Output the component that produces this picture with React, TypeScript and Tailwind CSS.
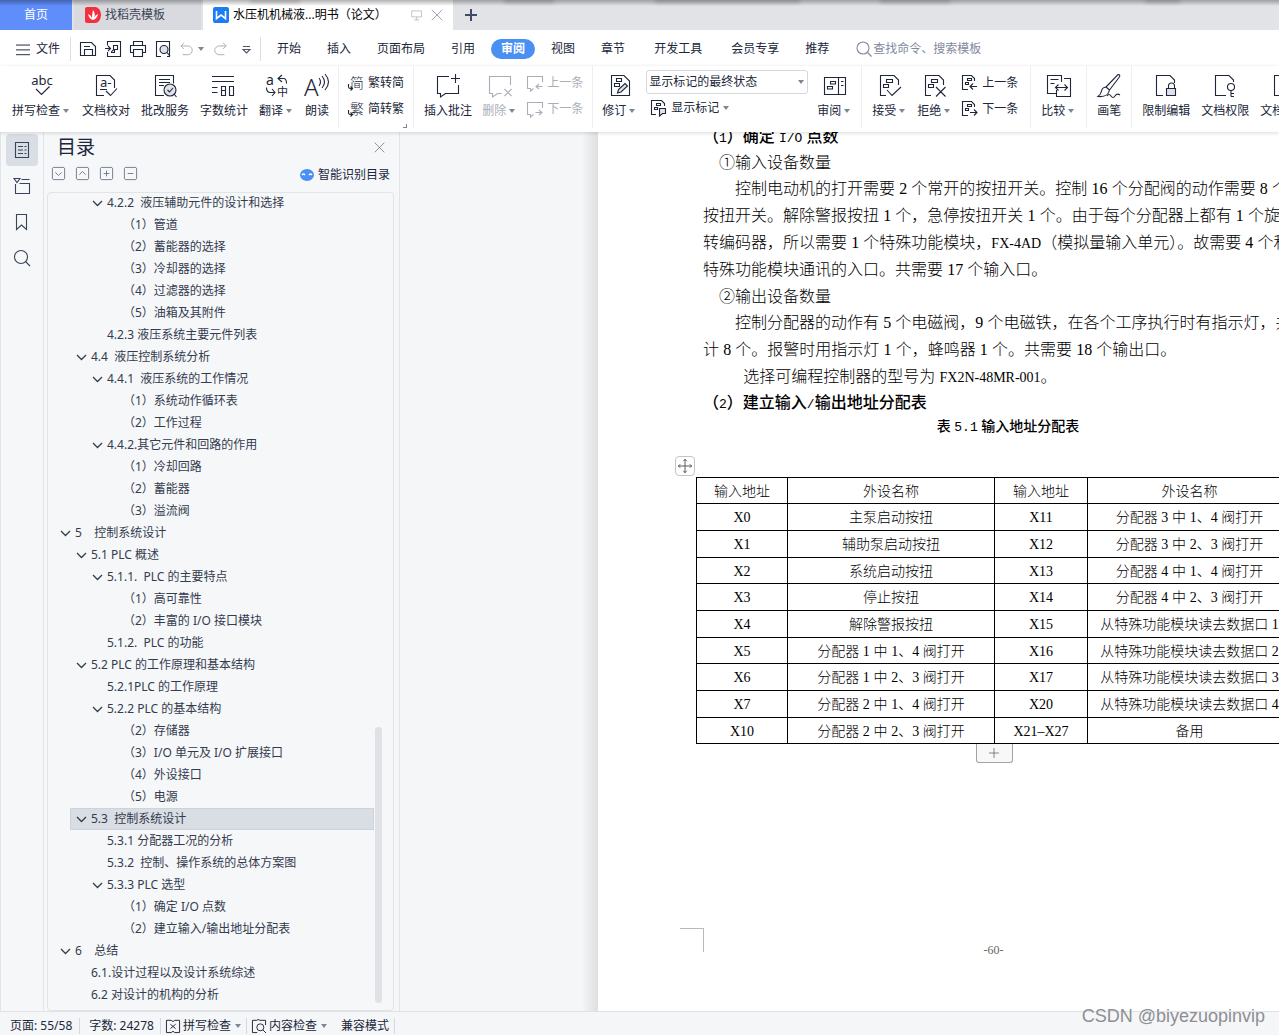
import { Fragment, ReactNode } from "react";

type IconName = keyof typeof ICONS;

const DOC = "M8 21.5H2.5V1.5H16l4.5 4.5V11";

// All large icons share a 24x24 grid, small ones 16x16
const ICONS = {
    spell: (
        <>
            <text x="12" y="11" textAnchor="middle" fontSize="13" fill="currentColor" stroke="none">abc</text>
            <path d="M6 15l5.5 5.5 8-8" />
        </>
    ),
    proof: (
        <>
            <path d="M10 21.5H2.5V1.5H16l4.5 4.5v8M6 15.5h7" />
            <text x="6" y="13" fontSize="13" fill="currentColor" stroke="none">a-</text>
            <path d="M12 17l4.5 4.5 6.5-7" />
        </>
    ),
    correct: (
        <>
            <path d="M11 21.5H2.5V1.5h18v8M6 5.5h11M6 8.5h11M6 11.5h5" />
            <circle cx="17" cy="16" r="6" fill="#dfe2e8" />
            <path d="M14.5 16l2 2 3.500-4M21 20l2.5 3" />
        </>
    ),
    count: <path d="M0 2.5h22M0 7.5h22M0 13.5h5.500M0 18.500h5.500M9.500 12.500h4v9h-4zM9.500 16.500h4M17.500 12.500h4v9h-4z" />,
    translate: (
        <>
            <text x="1" y="11" fontSize="14" fill="currentColor" stroke="none">a</text>
            <text x="12" y="22" fontSize="11" fill="currentColor" stroke="none">中</text>
            <path d="M17 1l-4 3.500 4 3.500M13.500 4.500h5q3 0 3 5M1.500 13.500q0 5 4 5h4M7 15l3 3.500-3 3.500" />
        </>
    ),
    read: (
        <>
            <text x="-1" y="22" fontSize="24" fontWeight="300" fill="currentColor" stroke="none">A</text>
            <path d="M14 4q3 4 0 8M17 2q5 6 0 12M20 0q7 8 0 16" />
        </>
    ),
    addNote: <path d="M13 2.500H1.500v17h3v3.500l5-3.500h13V11M19.500 0v9M15 4.500h9" />,
    delNote: (
        <>
            <path d="M22.500 11V2.500h-21v17h3v3.500l5-3.500h4" />
            <path d="M16.500 15l7 7M23.500 15l-7 7" />
        </>
    ),
    revise: (
        <>
            <path d="M16 1.500H3.500v20h18V7zM8.500 4.500h5v3h-5zM6.500 9.500h5v3h-5z" />
            <path d="M9.500 19l1-3.500 6.500-6 2.500 2.500-6.500 6z" fill="#dfe2e8" />
        </>
    ),
    review: <path d="M1.500 3.500h14v17h-14zM15.500 3.500h7v17h-7M18 7.500h2.500M18 11.500h2.500M7.500 7.500h5v2.500h-5zM4.500 12.500h5v2.500h-5z" />,
    accept: <path d={DOC + "M8.500 5.500h6v3h-6zM5.500 10.500h5v3h-5zM9 16l5 5.500 9-8.500"} />,
    reject: <path d={DOC + "M8.500 5.500h6v3h-6zM5.500 10.500h5v3h-5zM13 13l9.500 9.500M22.500 13L13 22.500"} />,
    compare: <path d="M14.500 8V1.500h-14v18h9V16M17 4.500h6.500v18h-14v-3M3.500 5.500h8M3.500 9.500h4M8.500 13.500h12M11.500 10.500l-3 3 3 3M17.500 10.500l3 3-3 3" />,
    brush: (
        <>
            <path d="M9 13L21 .500q3 0 1 3L12.500 16zM9 13q-4 .500-4.500 4T1 22.500q10 1 11.500-6.500z" />
            <path d="M10 22q2-3 4 0t4 0 5-1" />
        </>
    ),
    lock: (
        <>
            <path d="M9 21.500H2.500V1.500H16l4.500 4.500V9M14.500 14v-2a3 3 0 016 0v2" />
            <path d="M12.500 14.500h9v7h-9z" fill="#dfe2e8" />
        </>
    ),
    key: (
        <>
            <path d="M13 21.500H2.500V1.500H16l4.500 4.500V8" />
            <circle cx="18" cy="13" r="3.500" />
            <path d="M18 16.500v6M18 19.500h3M18 22.500h3" />
        </>
    ),
    doc: <path d={DOC + "v10H8"} />,
};

function Icon({ name }: { name: IconName }) {
    return (
        <svg className="h-6 w-6 overflow-visible" viewBox="0 0 24 24" fill="none" stroke="currentColor" strokeWidth="1.1">
            {ICONS[name]}
        </svg>
    );
}

function Small({ d, children, className = "h-4 w-4" }: { d?: string; children?: ReactNode; className?: string }) {
    return (
        <svg className={`shrink-0 overflow-visible ${className}`} viewBox="0 0 16 16" fill="none" stroke="currentColor" strokeWidth="1.1">
            {d && <path d={d} />}
            {children}
        </svg>
    );
}

function Caret() {
    return (
        <svg className="h-1 w-1.5 shrink-0 text-[#7d8597]" viewBox="0 0 6 4" fill="currentColor">
            <path d="M0 0h6L3 4z" />
        </svg>
    );
}

function RibbonButton({ icon, label, caret, muted }: { icon: IconName; label: string; caret?: boolean; muted?: boolean }) {
    return (
        <button className={`flex shrink-0 flex-col items-center gap-1 pt-2 ${muted ? "text-[#a9aeb8]" : ""}`}>
            <Icon name={icon} />
            <span className="flex items-center gap-[3px] leading-[18px]">
                {label}
                {caret && (
                    <span className="flex w-2">
                        <Caret />
                    </span>
                )}
            </span>
        </button>
    );
}

function RowButton({ icon, label, caret }: { icon: ReactNode; label: string; caret?: boolean }) {
    return (
        <button className="flex h-[26px] items-center gap-1">
            {icon}
            <span>{label}</span>
            {caret && <Caret />}
        </button>
    );
}

// Character with a small turning arrow at its lower left
function ConvertIcon({ char }: { char: string }) {
    return (
        <Small>
            <text x="2" y="13" fontSize="14" fontWeight="300" fill="currentColor" stroke="none">{char}</text>
            <path d="M.500 9v3q0 1.500 2 1.500h1.500M2.500 11.500l2 2-2 2" />
        </Small>
    );
}

function Group({ children, className = "px-[10px]" }: { children: ReactNode; className?: string }) {
    return <div className={`flex h-[62px] shrink-0 border-r border-[#eceef1] ${className}`}>{children}</div>;
}

function TabBar() {
    return (
        <div className="relative flex h-[30px] shrink-0 bg-[#e2e3e7]">
            <button className="w-[72px] bg-[#5f8dfa] text-white">首页</button>
            <button className="ml-0.5 flex w-[127px] items-center gap-1 bg-[#d8dadf] pl-[11px] text-[#3c4354]">
                <svg className="h-4 w-4" viewBox="0 0 16 16">
                    <path d="M2 0h8a6 8 0 010 16H2a2 2 0 01-2-2V2a2 2 0 012-2z" fill="#f5303d" />
                    <path d="M8 13q-4-1-5-6 3 1 4 4 0-4 1-8 3 4 1 8 1-3 4-4-1 5-5 6z" fill="#fff" />
                </svg>
                找稻壳模板
            </button>
            <div className="ml-0.5 flex w-[250px] items-center bg-white pl-2.5 text-black">
                <svg className="h-4 w-4" viewBox="0 0 16 16">
                    <rect width="16" height="16" rx="2" fill="#1b7cf5" />
                    <path d="M3.500 4v7.500L8 8l4.500 3.500V4" fill="none" stroke="#fff" strokeWidth="1.600" />
                </svg>
                <span className="ml-1 flex-1 whitespace-nowrap">水压机机械液...明书（论文）</span>
                <Small className="h-3 w-3 text-[#b3b9c9]" d="M1 2.500h13v8H1zM7.500 10.500v4M4 14.500h7" />
                <button aria-label="关闭" className="mr-2.5 ml-2">
                    <Small className="h-3 w-3 text-[#8891a8]" d="M1 1l14 14M15 1L1 15" />
                </button>
            </div>
            <button aria-label="新建" className="ml-3">
                <svg className="h-3 w-3 text-[#3d4a68]" viewBox="0 0 12 12" stroke="currentColor" strokeWidth="2">
                    <path d="M6 0v12M0 6h12" />
                </svg>
            </button>
            {/* Shadow cast by the window above */}
            <div className="pointer-events-none absolute inset-x-0 top-0 flex h-1.5 bg-gradient-to-b from-black/30 to-transparent pl-[250px]">
                <div className="h-0.5 w-[50px] bg-black/30 blur-[2px]" />
                <div className="ml-[204px] h-0.5 w-[50px] bg-black/30 blur-[2px]" />
                <div className="ml-[101px] h-0.5 w-[145px] bg-black/30 blur-[2px]" />
                <div className="ml-[80px] h-0.5 w-[70px] bg-black/30 blur-[2px]" />
                <div className="ml-[195px] h-0.5 w-[35px] bg-black/30 blur-[2px]" />
            </div>
        </div>
    );
}

const MENU = ["开始", "插入", "页面布局", "引用", "审阅", "视图", "章节", "开发工具", "会员专享", "推荐"];

function MenuBar() {
    return (
        <div className="flex h-9 shrink-0 items-center pt-0.5">
            <button className="flex items-center gap-1.5 pl-4">
                <Small className="h-3.5 w-3.5" d="M0 3.500h16M0 9h16M0 14.500h16" />
                文件
            </button>
            <div className="ml-[10px] flex h-6 w-[191px] items-center border-x border-[#dcdfe4] pl-[9px]">
                <div className="flex flex-1 items-center gap-[9px]">
                    <button aria-label="保存"><Small d="M.500 1.500h11l4 4v9H.500zM4.500 14.500v-6h8v6M4 5.500h6" /></button>
                    <button aria-label="输出为PDF"><Small d="M2.500 4.500v-4h13v15h-13V11M0 7.500h5M3 5l2.500 2.500L3 10M8.500 8.500V4.500h4v4h-3q-3 1-3 3h3v-3" /></button>
                    <button aria-label="打印"><Small d="M3.500 4.500v-4h9v4M3.500 11.500h-3v-7h15v7h-3M3.500 8.500h9v7h-9z" /></button>
                    <button aria-label="打印预览">
                        <Small d="M6 15.500H1.500V.500h13v15H12">
                            <circle cx="9" cy="8.500" r="4" fill="#dfe2e8" />
                            <path d="M12 11.500l3 3.500" />
                        </Small>
                    </button>
                    <button aria-label="撤销" className="flex items-center gap-1 text-[#a9aeb8]">
                        <Small className="h-3.5 w-3.5" d="M4.500 1L1 4.500 4.500 8M1 4.500h8a5 5 0 010 10H3" />
                        <Caret />
                    </button>
                    <button aria-label="恢复" className="text-[#a9aeb8]">
                        <Small className="h-3.5 w-3.5" d="M11.500 1L15 4.500 11.500 8M15 4.500H7a5 5 0 000 10h6" />
                    </button>
                    <button aria-label="自定义快速访问" className="pl-0.5 text-[#4d5567]"><Small d="M5 5.500h7M5 8.500h7l-3.500 3.500z" /></button>
                </div>
            </div>
            <nav className="ml-[3px] flex items-center">
                {MENU.map((item) => (
                    <button
                        key={item}
                        className={
                            item === "审阅"
                                ? "mx-[3px] h-5 rounded-full bg-[#4a90f2] px-[10px] font-bold text-white"
                                : item === "开发工具"
                                    ? "px-4"
                                    : "px-[13px]"
                        }
                    >
                        {item}
                    </button>
                ))}
            </nav>
            <label className="ml-[14px] flex items-center gap-px text-[#8189a0]">
                <Small>
                    <circle cx="7" cy="7" r="6" />
                    <path d="M11.500 11.500l4 4" />
                </Small>
                <input aria-label="查找命令" className="w-40 outline-none placeholder:text-[#8189a0]" placeholder="查找命令、搜索模板" />
            </label>
        </div>
    );
}

function Ribbon() {
    const notePrev = "M15.500 7V1.500H.500v12h3V16l3-2.500M15.500 11.500h-6M12 9l-3 2.500 3 2.500";
    const noteNext = "M15.500 7V1.500H.500v12h3V16l3-2.500M8.500 11.500h6M12 9l3 2.500-3 2.500";
    const docPart = "M6 14.500H.500V.500h9l3 3V6M5.500 3.500h4v2h-4zM3.500 7.500h3v2h-3z";
    return (
        <div className="relative z-10 flex h-[66px] shrink-0 overflow-hidden shadow-[0_1px_4px_rgba(0,0,0,0.15)]">
            <Group className="gap-[11px] pr-[9px] pl-3">
                <RibbonButton icon="spell" label="拼写检查" caret />
                <RibbonButton icon="proof" label="文档校对" />
                <RibbonButton icon="correct" label="批改服务" />
                <RibbonButton icon="count" label="字数统计" />
                <RibbonButton icon="translate" label="翻译" caret />
                <RibbonButton icon="read" label="朗读" />
            </Group>
            <Group className="relative px-[9px]">
                <div className="pt-1">
                    <RowButton label="繁转简" icon={<ConvertIcon char="简" />} />
                    <RowButton label="简转繁" icon={<ConvertIcon char="繁" />} />
                </div>
                <span className="absolute right-1.5 bottom-0 h-1 w-1 border-r border-b border-[#7d8597]" />
            </Group>
            <Group className="gap-[10px] pr-[9px] pl-[10px]">
                <RibbonButton icon="addNote" label="插入批注" />
                <RibbonButton icon="delNote" label="删除" caret muted />
                <div className="pt-1 text-[#a9aeb8]">
                    <RowButton label="上一条" icon={<Small d={notePrev} />} />
                    <RowButton label="下一条" icon={<Small d={noteNext} />} />
                </div>
            </Group>
            <Group className="gap-[9px] px-[9px]">
                <RibbonButton icon="revise" label="修订" caret />
                <div className="pt-1">
                    <div className="relative flex h-6 w-[162px] items-center">
                        <select aria-label="显示标记" className="h-6 w-full appearance-none rounded-[3px] border border-[#d5d8de] pl-0.5 text-xs outline-none">
                            <option>显示标记的最终状态</option>
                        </select>
                        <span className="pointer-events-none absolute right-1"><Caret /></span>
                    </div>
                    <div className="pt-px pl-[5px]">
                        <RowButton
                            label="显示标记"
                            caret
                            icon={
                                <Small d="M5 14.500H.500V.500h10l3 3V6M5.500 3.500h4v2h-4zM3.500 7.500h3v2h-3z">
                                    <path d="M8.500 8.500h6v5h-3l-3 2.500z" fill="#dfe2e8" />
                                </Small>
                            }
                        />
                    </div>
                </div>
                <RibbonButton icon="review" label="审阅" caret />
            </Group>
            <Group className="gap-[10px] px-[10px]">
                <RibbonButton icon="accept" label="接受" caret />
                <RibbonButton icon="reject" label="拒绝" caret />
                <div className="pt-1 pr-0.5">
                    <RowButton label="上一条" icon={<Small d={docPart + "M15 11.500H8M11 8.500l-3 3 3 3"} />} />
                    <RowButton label="下一条" icon={<Small d={docPart + "M8 11.500h7M12 8.500l3 3-3 3"} />} />
                </div>
            </Group>
            <Group>
                <RibbonButton icon="compare" label="比较" caret />
            </Group>
            <Group>
                <RibbonButton icon="brush" label="画笔" />
            </Group>
            <Group className="gap-[11px] px-[10px]">
                <RibbonButton icon="lock" label="限制编辑" />
                <RibbonButton icon="key" label="文档权限" />
                <RibbonButton icon="doc" label="文档定稿" />
            </Group>
        </div>
    );
}

// level, text, has children
const TOC: [number, string, boolean?][] = [
    [3, "4.2.2  液压辅助元件的设计和选择", true],
    [4, "（1）管道"],
    [4, "（2）蓄能器的选择"],
    [4, "（3）冷却器的选择"],
    [4, "（4）过滤器的选择"],
    [4, "（5）油箱及其附件"],
    [3, "4.2.3 液压系统主要元件列表"],
    [2, "4.4  液压控制系统分析", true],
    [3, "4.4.1  液压系统的工作情况", true],
    [4, "（1）系统动作循环表"],
    [4, "（2）工作过程"],
    [3, "4.4.2.其它元件和回路的作用", true],
    [4, "（1）冷却回路"],
    [4, "（2）蓄能器"],
    [4, "（3）溢流阀"],
    [1, "5    控制系统设计", true],
    [2, "5.1 PLC 概述", true],
    [3, "5.1.1.  PLC 的主要特点", true],
    [4, "（1）高可靠性"],
    [4, "（2）丰富的 I/O 接口模块"],
    [3, "5.1.2.  PLC 的功能"],
    [2, "5.2 PLC 的工作原理和基本结构", true],
    [3, "5.2.1PLC 的工作原理"],
    [3, "5.2.2 PLC 的基本结构", true],
    [4, "（2）存储器"],
    [4, "（3）I/O 单元及 I/O 扩展接口"],
    [4, "（4）外设接口"],
    [4, "（5）电源"],
    [2, "5.3  控制系统设计", true],
    [3, "5.3.1 分配器工况的分析"],
    [3, "5.3.2  控制、操作系统的总体方案图"],
    [3, "5.3.3 PLC 选型", true],
    [4, "（1）确定 I/O 点数"],
    [4, "（2）建立输入/输出地址分配表"],
    [1, "6    总结", true],
    [2, "6.1.设计过程以及设计系统综述"],
    [2, "6.2 对设计的机构的分析"],
];

const INDENT = ["", "pl-[11px]", "pl-[27px]", "pl-[43px]", "pl-[59px]"];
const SELECTED = "ml-[22px] w-[304px] border border-[#cdd3da] bg-[#d9dde4] pl-1";

function SideBar() {
    return (
        <div className="flex w-11 shrink-0 flex-col items-center gap-1 border-x border-[#e1e4e9] pt-0.5 text-[#3b4358]">
            <button aria-label="目录" className="flex h-8 w-8 items-center justify-center rounded-sm bg-[#d9dde4]">
                <Small d="M1.500.500h13v15h-13zM4 4.500h5M10.500 4.500h2M4 8h5M10.500 8h2M4 11.500h5M10.500 11.500h2" />
            </button>
            <button aria-label="章节" className="flex h-8 w-8 items-center justify-center">
                <Small d="M0 .500h6L3 4.500zM7.500 1.500h8M1.500 6v9.500h14v-10h-10" />
            </button>
            <button aria-label="书签" className="flex h-8 w-8 items-center justify-center">
                <Small d="M2.500.500h10v15l-5-4.500-5 4.500z" />
            </button>
            <button aria-label="查找" className="flex h-8 w-8 items-center justify-center">
                <Small>
                    <circle cx="7" cy="7" r="6.500" />
                    <path d="M11.500 11.500L16 16" />
                </Small>
            </button>
        </div>
    );
}

function TocPanel() {
    const tools: [string, string][] = [
        ["展开", "M4 6.500l4 4 4-4"],
        ["收缩", "M4 9.500l4-4 4 4"],
        ["提升", "M4.500 8h7M8 4.500v7"],
        ["降低", "M4.500 8h7"],
    ];
    return (
        <aside className="flex w-[356px] shrink-0 flex-col border-r border-[#e1e4e9] pr-[5px] pl-[3px] text-[#343b4d]">
            <div className="flex h-[30px] items-center justify-between pr-[9px] pl-[10px]">
                <h2 className="pt-0.5 text-[19px] text-[#20263a]">目录</h2>
                <button aria-label="关闭目录">
                    <Small className="h-[11px] w-[11px] text-[#6b7386]" d="M1 1l14 14M15 1L1 15" />
                </button>
            </div>
            <div className="flex h-[30px] items-start gap-[11px] pt-[5px] pr-1 pl-[5px]">
                {tools.map(([label, d]) => (
                    <button key={label} aria-label={label}>
                        <Small className="h-[13px] w-[13px] text-[#6b7386]" d={"M1.500.500h13l1 1v13l-1 1h-13l-1-1v-13z" + d} />
                    </button>
                ))}
                <button className="ml-auto flex items-center gap-1 text-[#20263a]">
                    <svg className="h-3.5 w-3.5" viewBox="0 0 14 14">
                        <ellipse cx="7" cy="7" rx="7" ry="6" fill="#4a90f2" />
                        <path d="M2 7q1.500-2 3 0M9 7q1.500-2 3 0" stroke="#fff" strokeWidth="1.300" fill="none" />
                    </svg>
                    智能识别目录
                </button>
            </div>
            <div className="flex min-h-0 flex-1 overflow-hidden rounded-sm border border-[#e1e4e9]">
                <ul className="-mt-px flex-1">
                    {TOC.map(([level, text, open]) => (
                        <li key={text + level}>
                            <button className={`flex h-[22px] items-center ${text.startsWith("5.3 ") ? SELECTED : INDENT[level]}`}>
                                <svg className="h-2.5 w-4" viewBox="0 0 16 10" fill="none" stroke="currentColor" strokeWidth="1.300">
                                    {open && <path d="M2 3l4.500 4.500L11 3" />}
                                </svg>
                                <span className="whitespace-pre">{text}</span>
                            </button>
                        </li>
                    ))}
                </ul>
                <div className="mr-[11px] mb-[7px] h-[276px] w-[7px] self-end rounded-full bg-[#dfe1e4]" />
            </div>
        </aside>
    );
}

const SERIF = "font-['Liberation_Serif'] leading-none";
const SERIF_SMALL = "font-['Liberation_Serif'] text-sm leading-none";
const MONO = "font-['Liberation_Mono'] text-[13px] leading-none";

// Latin runs are set in their own face beside the CJK text
function Mixed({ text, mono }: { text: string; mono?: boolean }) {
    return (
        <>
            {text.split(/([A-Za-z0-9\/.–-]+)/).map((part, i) =>
                i % 2 ? (
                    <span key={i} className={mono ? MONO : /[A-Z]/.test(part) ? SERIF_SMALL : SERIF}>{part}</span>
                ) : (
                    <Fragment key={i}>{part}</Fragment>
                )
            )}
        </>
    );
}

function Lines({ lines, mono, className = "" }: { lines: string[]; mono?: boolean; className?: string }) {
    return (
        <p className={`pl-[105px] ${className}`}>
            {lines.map((line) => (
                <span key={line} className="block">
                    <Mixed text={line} mono={mono} />
                </span>
            ))}
        </p>
    );
}

const ROWS = [
    ["X0", "主泵启动按扭", "X11", "分配器 3 中 1、4 阀打开"],
    ["X1", "辅助泵启动按扭", "X12", "分配器 3 中 2、3 阀打开"],
    ["X2", "系统启动按扭", "X13", "分配器 4 中 1、4 阀打开"],
    ["X3", "停止按扭", "X14", "分配器 4 中 2、3 阀打开"],
    ["X4", "解除警报按扭", "X15", "从特殊功能模块读去数据口 1"],
    ["X5", "分配器 1 中 1、4 阀打开", "X16", "从特殊功能模块读去数据口 2"],
    ["X6", "分配器 1 中 2、3 阀打开", "X17", "从特殊功能模块读去数据口 3"],
    ["X7", "分配器 2 中 1、4 阀打开", "X20", "从特殊功能模块读去数据口 4"],
    ["X10", "分配器 2 中 2、3 阀打开", "X21–X27", "备用"],
];

function DocumentPage() {
    return (
        <main className="flex min-w-0 flex-1 overflow-hidden bg-[#f5f6f8] pl-[182px]">
            <div className="w-4 shrink-0 bg-gradient-to-r from-[#f5f6f8] to-[#dedfe1]" />
            <article className="w-[791px] shrink-0 bg-white text-base whitespace-pre text-black">
                <div className="-mt-[9px]">
                    <Lines mono className="leading-[26px] font-medium" lines={["（1）确定 I/O 点数"]} />
                    <Lines className="leading-[26px] font-light" lines={["　①输入设备数量"]} />
                    <Lines
                        className="leading-[27px] font-light"
                        lines={[
                            "　　控制电动机的打开需要 2 个常开的按扭开关。控制 16 个分配阀的动作需要 8 个",
                            "按扭开关。解除警报按扭 1 个，急停按扭开关 1 个。由于每个分配器上都有 1 个旋",
                            "转编码器，所以需要 1 个特殊功能模块，FX-4AD（模拟量输入单元）。故需要 4 个和",
                            "特殊功能模块通讯的入口。共需要 17 个输入口。",
                        ]}
                    />
                    <Lines className="leading-[26px] font-light" lines={["　②输出设备数量"]} />
                    <Lines
                        className="leading-[27px] font-light"
                        lines={[
                            "　　控制分配器的动作有 5 个电磁阀，9 个电磁铁，在各个工序执行时有指示灯，共",
                            "计 8 个。报警时用指示灯 1 个，蜂鸣器 1 个。共需要 18 个输出口。",
                        ]}
                    />
                    <Lines className="leading-[26px] font-light" lines={["　　  选择可编程控制器的型号为 FX2N-48MR-001。"]} />
                    <Lines mono className="leading-[26px] font-medium" lines={["（2）建立输入/输出地址分配表"]} />
                </div>

                <div className="relative ml-[98px] w-[596px]">
                    <table className="w-full table-fixed border-collapse text-center text-sm leading-5 font-light">
                        <caption className="h-[62px] pl-7 text-center text-sm leading-[22px] font-medium">
                            <Mixed mono text="表 5.1 输入地址分配表" />
                        </caption>
                        <colgroup>
                            <col className="w-[91px]" />
                            <col className="w-[207px]" />
                            <col className="w-[93px]" />
                            <col />
                        </colgroup>
                        <thead>
                            <tr className="h-[26px]">
                                {["输入地址", "外设名称", "输入地址", "外设名称"].map((h, i) => (
                                    <th key={i} className="border border-black p-0 font-light">{h}</th>
                                ))}
                            </tr>
                        </thead>
                        <tbody>
                            {ROWS.map((row) => (
                                <tr key={row[0]} className="h-[27px] nth-[3n]:h-[26px]">
                                    {row.map((cell, i) => (
                                        <td key={i} className="border border-black p-0">
                                            <Mixed text={cell} />
                                        </td>
                                    ))}
                                </tr>
                            ))}
                        </tbody>
                    </table>
                    <button aria-label="移动表格" className="absolute top-[41px] -left-[21px] flex h-5 w-5 items-center justify-center rounded-sm border border-[#c4c4c4] text-[#555]">
                        <Small className="h-3.5 w-3.5" d="M8 0v16M0 8h16M6 2.500L8 .500l2 2M6 13.500l2 2 2-2M2.500 6l-2 2 2 2M13.500 6l2 2-2 2" />
                    </button>
                    <button aria-label="添加行" className="mx-auto flex h-[19px] w-[37px] items-center justify-center rounded-b-[3px] border border-t-0 border-[#a3a3a3] bg-[#f8f8f8] text-[#555]">
                        <Small className="h-2.5 w-2.5" d="M8 0v16M0 8h16" />
                    </button>
                </div>

                <div className="mt-[165px] flex items-start pl-[82px]">
                    <span className="h-6 w-6 border-t border-r border-[#b9b9b9]" />
                    <span className="flex-1 pt-4 pr-[106px] text-center font-['Liberation_Serif'] text-xs leading-3 text-[#666]">-60-</span>
                </div>
            </article>
        </main>
    );
}

function StatusBar() {
    return (
        <footer className="flex h-6 shrink-0 items-center border-t border-[#dfe1e5] bg-[#f5f6f8] pt-[5px] pl-[10px]">
            <span className="border-r border-[#d5d8de] pr-[7px]">页面: 55/58</span>
            <span className="border-r border-[#d5d8de] pr-[6px] pl-[9px]">字数: 24278</span>
            <button className="flex items-center gap-[3px] border-r border-[#d5d8de] pr-[5px] pl-[5px]">
                <Small className="h-3.5 w-3.5" d="M6 1.500H.500v14H6l2-1.500 2 1.500h5.500v-14H10L8 3 6 1.500M5 6l6 5M11 6l-6 5" />
                拼写检查
                <span className="pl-px"><Caret /></span>
            </button>
            <button className="flex items-center gap-[3px] pl-[5px]">
                <Small className="h-3.5 w-3.5" d="M6 15.500H.500v-14h5L7 .500l2 1h6.500V7">
                    <circle cx="9.500" cy="9.500" r="4" />
                    <path d="M12.500 12.500L16 16" />
                </Small>
                内容检查
                <span className="pl-px"><Caret /></span>
            </button>
            <span className="border-r border-[#d5d8de] pr-[5px] pl-[14px]">兼容模式</span>
        </footer>
    );
}

export default function App() {
    return (
        <div className="relative flex h-screen flex-col overflow-hidden bg-white font-['Noto_Sans','Noto_Sans_CJK_SC',sans-serif] text-xs text-[#20263a]">
            <TabBar />
            <MenuBar />
            <Ribbon />
            <div className="flex min-h-0 flex-1 bg-[#f5f7f9]">
                <SideBar />
                <TocPanel />
                <DocumentPage />
            </div>
            <StatusBar />
            <div className="pointer-events-none absolute right-[14px] bottom-[7px] font-['Liberation_Sans'] text-lg leading-6 text-[#8d8f94]">
                CSDN @biyezuopinvip
            </div>
        </div>
    );
}
